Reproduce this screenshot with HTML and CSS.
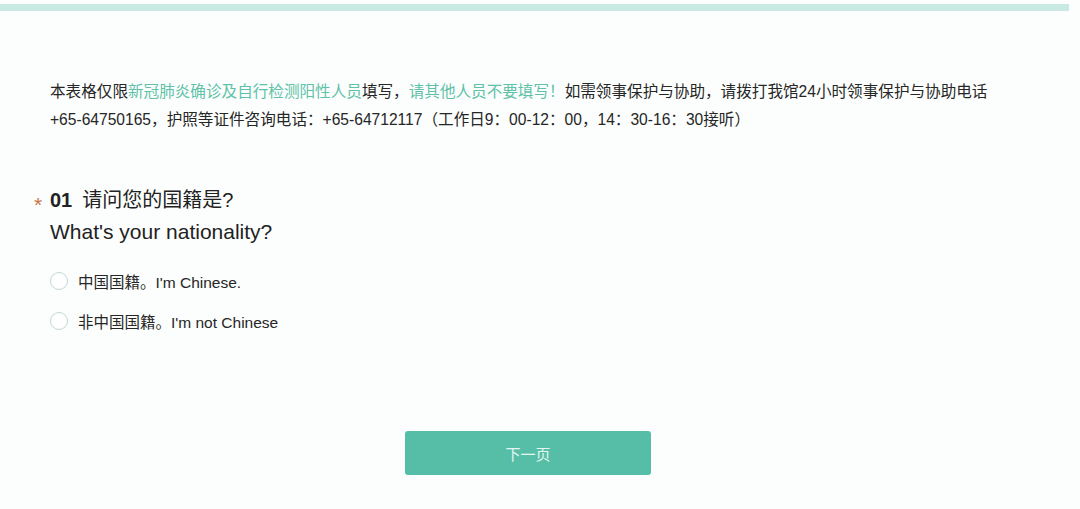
FILE: index.html
```html
<!DOCTYPE html>
<html lang="zh">
<head>
<meta charset="utf-8">
<link rel="stylesheet" href="styles.css">
</head>
<body>
<div class="topbar"></div>
<main class="form">
  <p class="intro">本表格仅限<span class="hl">新冠肺炎确诊及自行检测阳性人员</span>填写，<span class="hl">请其他人员不要填写！</span>如需领事保护与协助，请拨打我馆24小时领事保护与协助电话<span class="nw">+65-64750165</span>，护照等证件咨询电话：<span class="nw">+65-64712117</span>（工作日9：00-12：00，14：30-16：30接听）</p>
  <section class="question">
    <h2 class="qtitle"><span class="star">*</span><span class="qnum">01</span><span class="qcn">请问您的国籍是?</span></h2>
    <div class="qen">What's your nationality?</div>
    <ul class="options">
      <li class="option"><span class="radio"></span><span>中国国籍。I'm Chinese.</span></li>
      <li class="option"><span class="radio"></span><span>非中国国籍。I'm not Chinese</span></li>
    </ul>
  </section>
  <div class="actions"><button class="next">下一页</button></div>
</main>
</body>
</html>
```
FILE: styles.css
```css
html, body {
  margin: 0;
  padding: 0;
  background: #fcfefd;
}
body {
  width: 1080px;
  height: 509px;
  overflow: hidden;
  font-family: "Liberation Sans", Arial, "Noto Sans CJK SC", sans-serif;
  color: #222;
}
.topbar {
  margin-top: 4px;
  height: 7px;
  width: 1069px;
  background: #c9e9e3;
}
.form {
  padding: 67px 0 0 50px;
  width: 980px;
}
.intro {
  margin: 0;
  font-size: 15.6px;
  line-height: 28px;
  color: #262626;
}
.hl { color: #5fc2a8; }
.nw { white-space: nowrap; }
.question {
  margin-top: 51px;
}
.qtitle {
  margin: 0;
  position: relative;
  font-weight: normal;
  font-size: 20px;
  line-height: 31px;
  display: flex;
  align-items: center;
}
.star {
  position: absolute;
  left: -16px;
  top: 4px;
  color: #c7764a;
  font-size: 21px;
}
.qnum {
  font-weight: bold;
  margin-right: 10px;
}
.qen {
  font-size: 21px;
  line-height: 31px;
}
.options {
  list-style: none;
  margin: 14px 0 0;
  padding: 0;
}
.option {
  display: flex;
  align-items: center;
  height: 40px;
  font-size: 15.5px;
  color: #262626;
}
.radio {
  box-sizing: border-box;
  width: 18px;
  height: 18px;
  border: 1.5px solid #c3d8d1;
  border-radius: 50%;
  margin-right: 10px;
  background: #fff;
}
.actions {
  display: flex;
  justify-content: center;
  width: 956px;
  margin-top: 90px;
}
.next {
  width: 246px;
  height: 44px;
  border: none;
  border-radius: 3px;
  background: #56bea7;
  color: #e3f6f1;
  font-family: "Noto Sans CJK SC", sans-serif;
  font-size: 15px;
}
```
